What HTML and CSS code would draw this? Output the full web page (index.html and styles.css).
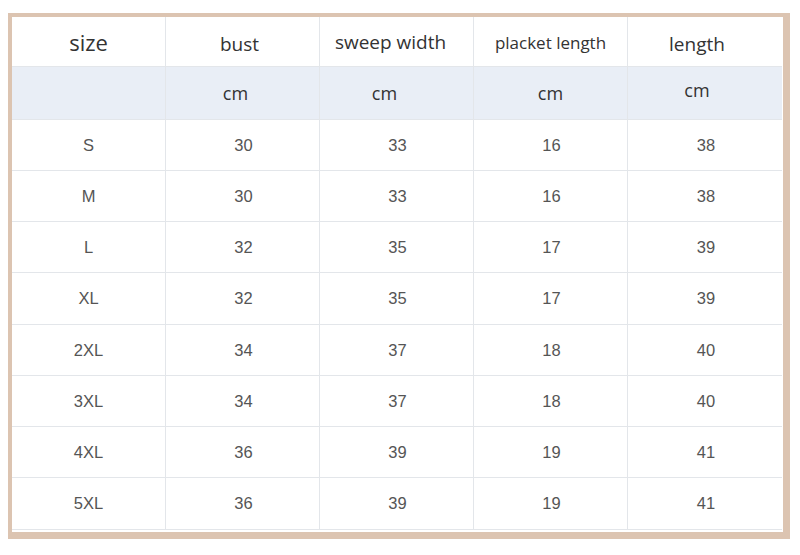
FILE: index.html
```html
<!DOCTYPE html>
<html>
<head>
<meta charset="utf-8">
<link rel="stylesheet" href="styles.css">
</head>
<body>
<div class="frame">
  <div class="grid">
    <div class="cell head big">size</div>
    <div class="cell head c2">bust</div>
    <div class="cell head c3">sweep width</div>
    <div class="cell head small">placket length</div>
    <div class="cell head c5">length</div>

    <div class="cell unit"></div>
    <div class="cell unit c2">cm</div>
    <div class="cell unit c3">cm</div>
    <div class="cell unit">cm</div>
    <div class="cell unit c5 up">cm</div>

    <div class="cell data">S</div><div class="cell data">30</div><div class="cell data">33</div><div class="cell data">16</div><div class="cell data">38</div>
    <div class="cell data">M</div><div class="cell data">30</div><div class="cell data">33</div><div class="cell data">16</div><div class="cell data">38</div>
    <div class="cell data">L</div><div class="cell data">32</div><div class="cell data">35</div><div class="cell data">17</div><div class="cell data">39</div>
    <div class="cell data">XL</div><div class="cell data">32</div><div class="cell data">35</div><div class="cell data">17</div><div class="cell data">39</div>
    <div class="cell data">2XL</div><div class="cell data">34</div><div class="cell data">37</div><div class="cell data">18</div><div class="cell data">40</div>
    <div class="cell data">3XL</div><div class="cell data">34</div><div class="cell data">37</div><div class="cell data">18</div><div class="cell data">40</div>
    <div class="cell data">4XL</div><div class="cell data">36</div><div class="cell data">39</div><div class="cell data">19</div><div class="cell data">41</div>
    <div class="cell data">5XL</div><div class="cell data">36</div><div class="cell data">39</div><div class="cell data">19</div><div class="cell data">41</div>
  </div>
</div>
</body>
</html>
```
FILE: styles.css
```css
html, body {
  margin: 0;
  padding: 0;
  background: #ffffff;
}
.frame {
  margin: 13px 0 0 8px;
  width: 771px;
  border-style: solid;
  border-color: #dcc4b1;
  border-width: 4px 7px 7px 4px;
  padding-bottom: 2px;
  background: #ffffff;
}
.grid {
  display: grid;
  grid-template-columns: repeat(5, 154px);
  grid-template-rows: 50px 53px 51px 51px 51px 52px 51px 51px 51px 52px;
}
.cell {
  box-sizing: border-box;
  border-right: 1px solid #e3e6ea;
  border-bottom: 1px solid #e3e6ea;
  display: flex;
  align-items: center;
  justify-content: center;
}
.cell:nth-child(5n) {
  border-right: none;
}
.head {
  font-family: "Open Sans", "Noto Sans", sans-serif;
  font-size: 19px;
  color: #333333;
  background: #ffffff;
  padding-top: 4px;
}
.head.big {
  font-size: 22px;
  padding-top: 0;
}
.head.small {
  font-size: 17px;
  padding-top: 2px;
}
.head.c3 {
  padding-top: 0;
}
.unit {
  font-family: "Open Sans", "Noto Sans", sans-serif;
  font-size: 18px;
  color: #333333;
  background: #e9eef6;
}
.unit.up {
  padding-bottom: 6px;
}
.c2 { padding-right: 6px; }
.c3 { padding-right: 12px; }
.c5 { padding-right: 16px; }
.unit.c2 { padding-right: 14px; }
.unit.c3 { padding-right: 24px; }
.data {
  font-family: "Liberation Sans", Arial, sans-serif;
  font-size: 16.5px;
  color: #555555;
  padding-left: 2px;
}
.data:nth-child(5n+1) {
  padding-left: 0;
}
```
